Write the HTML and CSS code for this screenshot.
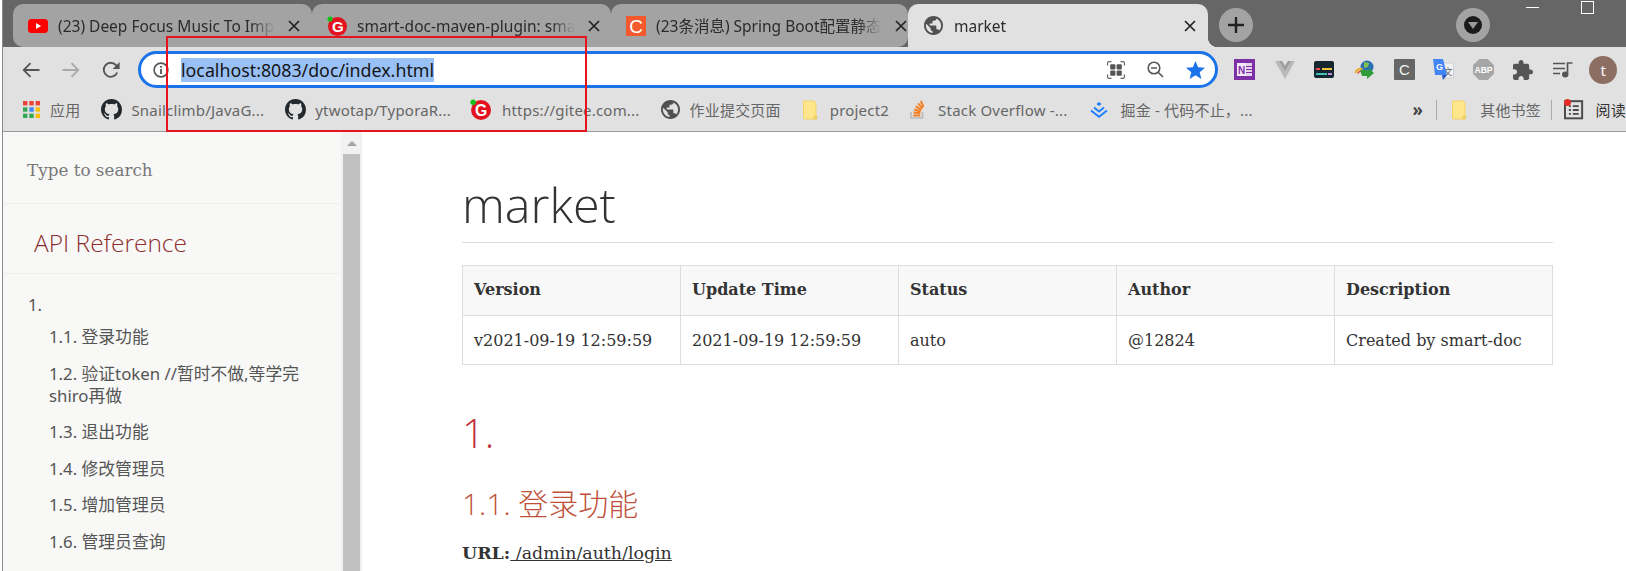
FILE: index.html
```html
<!DOCTYPE html>
<html lang="zh">
<head>
    <meta charset="UTF-8">
    <title>market</title>
    <link rel="stylesheet" href="styles.css">
</head>
<body>
    <svg class="defs" width="0" height="0">
        <symbol id="i-github" viewBox="0 0 16 16"><path fill="#24292e" d="M8 0C3.58 0 0 3.58 0 8c0 3.54 2.29 6.53 5.47 7.59.4.07.55-.17.55-.38 0-.19-.01-.82-.01-1.49-2.01.37-2.53-.49-2.69-.94-.09-.23-.48-.94-.82-1.13-.28-.15-.68-.52-.01-.53.63-.01 1.08.58 1.23.82.72 1.21 1.87.87 2.33.66.07-.52.28-.87.51-1.07-1.78-.2-3.64-.89-3.64-3.95 0-.87.31-1.59.82-2.15-.08-.2-.36-1.02.08-2.12 0 0 .67-.21 2.2.82.64-.18 1.32-.27 2-.27.68 0 1.36.09 2 .27 1.53-1.04 2.2-.82 2.2-.82.44 1.1.16 1.92.08 2.12.51.56.82 1.27.82 2.15 0 3.07-1.87 3.75-3.65 3.95.29.25.54.73.54 1.48 0 1.07-.01 1.93-.01 2.2 0 .21.15.46.55.38A8.013 8.013 0 0016 8c0-4.42-3.58-8-8-8z"/></symbol>
        <symbol id="i-globe" viewBox="2 2 20 20"><path fill="#505050" d="M12 2C6.48 2 2 6.48 2 12s4.48 10 10 10 10-4.48 10-10S17.52 2 12 2zm-1 17.93c-3.95-.49-7-3.85-7-7.93 0-.62.08-1.21.21-1.79L9 15v1c0 1.1.9 2 2 2v1.93zm6.9-2.54c-.26-.81-1-1.39-1.9-1.39h-1v-3c0-.55-.45-1-1-1H8v-2h2c.55 0 1-.45 1-1V7h2c1.1 0 2-.9 2-2v-.41c2.93 1.19 5 4.06 5 7.41 0 2.08-.8 3.97-2.1 5.39z"/></symbol>
        <symbol id="i-gitee" viewBox="0 0 20 20">
            <circle cx="10.5" cy="10.5" r="9.5" fill="#e2131e"/>
            <text x="10.8" y="16" font-family="Liberation Sans" font-weight="700" font-size="15" fill="#fff" text-anchor="middle">G</text>
            <circle cx="3" cy="3" r="2.6" fill="#12c21b"/>
        </symbol>
        <symbol id="i-folder" viewBox="0 0 16 20"><path fill="#fde68c" stroke="#f6d365" d="M1.5 1h10.5l2 2v14l-1 2H2.5l-1-1z"/><path fill="none" stroke="#f3c850" d="M12 19v-3h2.5v3z"/></symbol>
        <symbol id="i-close" viewBox="0 0 12 12"><path stroke="#222" stroke-width="1.7" d="M1 1l10 10M11 1L1 11"/></symbol>
    </svg>

    <div class="window">
        <div class="tabstrip">
            <div class="tab tab-first">
                <svg class="favicon" viewBox="0 0 20 14"><rect width="20" height="14" rx="3.5" fill="#f00"/><path fill="#fff" d="M8 4l5.2 3L8 10z"/></svg>
                <span class="tab-title">(23) Deep Focus Music To Imp</span>
                <svg class="tab-close"><use href="#i-close"/></svg>
            </div>
            <div class="tab">
                <svg class="favicon"><use href="#i-gitee"/></svg>
                <span class="tab-title">smart-doc-maven-plugin: sma</span>
                <svg class="tab-close"><use href="#i-close"/></svg>
            </div>
            <div class="tab tab-last">
                <svg class="favicon" viewBox="0 0 20 20"><rect width="20" height="20" fill="#f4592e"/><text x="10" y="16.5" font-family="Liberation Sans" font-size="19" fill="#fff" text-anchor="middle">C</text></svg>
                <span class="tab-title">(23条消息) Spring Boot配置静态</span>
                <svg class="tab-close"><use href="#i-close"/></svg>
            </div>
            <div class="tab tab-active">
                <svg class="favicon favicon-globe"><use href="#i-globe"/></svg>
                <span class="tab-title">market</span>
                <svg class="tab-close"><use href="#i-close"/></svg>
            </div>
            <div class="newtab">
                <svg width="18" height="18" viewBox="0 0 18 18"><path stroke="#222" stroke-width="2.4" d="M9 1v16M1 9h16"/></svg>
            </div>
            <div class="tabsearch"><span class="tabsearch-dot"></span></div>
            <div class="winbtns">
                <span class="win-min"></span>
                <span class="win-max"></span>
            </div>
        </div>

        <div class="toolbar">
            <div class="navbtn">
                <svg width="18" height="16" viewBox="0 0 18 16"><path fill="none" stroke="#555" stroke-width="1.8" d="M17.5 8H2M8.5 1.2L1.7 8l6.8 6.8"/></svg>
            </div>
            <div class="navbtn">
                <svg width="18" height="16" viewBox="0 0 18 16"><path fill="none" stroke="#a9a9a9" stroke-width="1.8" d="M.5 8H16M9.5 1.2L16.3 8l-6.8 6.8"/></svg>
            </div>
            <div class="navbtn">
                <svg width="18" height="18" viewBox="0 0 18 18"><path fill="none" stroke="#555" stroke-width="1.9" d="M15.2 11.5A7 7 0 1 1 14 4.2L16 6.3"/><path fill="#555" d="M17.6 1v7h-7z"/></svg>
            </div>

            <div class="omnibox">
                <svg class="omni-info" width="16" height="16" viewBox="0 0 16 16"><circle cx="8" cy="8" r="6.9" fill="none" stroke="#555" stroke-width="1.6"/><path fill="#555" d="M7.1 7h1.8v5H7.1zM7.1 4h1.8v1.8H7.1z"/></svg>
                <span class="omni-url">localhost:8083/doc/index.html</span>
                <div class="omni-actions">
                    <svg width="18" height="18" viewBox="0 0 18 18"><path fill="none" stroke="#666" stroke-width="1.2" d="M.6 4.500V2A1.400 1.400 0 0 1 2 .6h2.500M13.500.6H16A1.400 1.400 0 0 1 17.400 2v2.500M17.400 13.500V16a1.400 1.400 0 0 1-1.400 1.400h-2.500M4.500 17.400H2A1.400 1.400 0 0 1 .6 16v-2.500"/><rect x="3.200" y="3.200" width="5.200" height="5.200" rx="1" fill="#555"/><rect x="9.600" y="3.200" width="5.200" height="5.200" rx="1" fill="#555"/><rect x="3.200" y="9.600" width="5.200" height="5.200" rx="1" fill="#555"/><rect x="9.600" y="9.600" width="5.200" height="5.200" rx="1" fill="#555"/></svg>
                    <svg width="17" height="17" viewBox="0 0 17 17"><circle cx="7" cy="7" r="5.8" fill="none" stroke="#555" stroke-width="1.6"/><path stroke="#555" stroke-width="1.6" d="M4 7h6M11.2 11.2L16 16"/></svg>
                    <svg width="19" height="18" viewBox="0 0 19 18"><path fill="#1a73e8" d="M9.500 0l2.600 6.300 6.900.5-5.300 4.400 1.700 6.800-5.900-3.700L3.600 18l1.700-6.800L0 6.800l6.900-.5z"/></svg>
                </div>
            </div>

            <div class="extensions">
                <div class="ext">
                    <svg width="21" height="21" viewBox="0 0 21 21"><rect width="21" height="21" fill="#7d2fa6"/><rect x="11" y="4" width="7" height="13" fill="#e6d4ef"/><path stroke="#7d2fa6" d="M11 7.500h7M11 10.500h7M11 13.500h7"/><rect x="3" y="4" width="9" height="13" fill="#f3e9f8"/><text x="7.500" y="14.500" font-family="Liberation Sans" font-weight="700" font-size="10" fill="#7d2fa6" text-anchor="middle">N</text></svg>
                </div>
                <div class="ext">
                    <svg width="20" height="18" viewBox="0 0 20 18"><path fill="#b9b9b9" d="M0 0h7l3 5 3-5h7L10 18z"/><path fill="#9d9d9d" d="M4 0h3l3 5 3-5h3l-6 10z"/></svg>
                </div>
                <div class="ext">
                    <svg width="20" height="17" viewBox="0 0 20 17"><rect width="20" height="17" rx="2" fill="#15262e"/><rect x="2" y="7" width="4" height="2" fill="#ea4b4b"/><rect x="8" y="7" width="10" height="2" fill="#f4c23c"/><rect x="2" y="12" width="11" height="2" fill="#3fc1b5"/><rect x="14" y="12" width="4" height="2" fill="#c68ad6"/></svg>
                </div>
                <div class="ext">
                    <svg width="21" height="20" viewBox="0 0 21 20"><circle cx="13" cy="7" r="6.500" fill="#2d6fb5"/><path fill="#7fbf4a" d="M10 2l5 1-1 4-4 1z"/><path fill="none" stroke="#e8b13a" stroke-width="2.400" d="M1.500 13a5 5 0 0 1 7-3.500"/><path fill="none" stroke="#d9493e" stroke-width="1.600" d="M4 13.500a3 3 0 0 1 4-2"/><path fill="#2f9e3a" d="M6 10h9v-2l5 5-7 6v-3H8z"/></svg>
                </div>
                <div class="ext">
                    <svg width="21" height="21" viewBox="0 0 21 21"><rect width="21" height="21" rx="1" fill="#666"/><text x="10.500" y="16" font-family="Liberation Sans" font-size="15" fill="#f2f2f2" text-anchor="middle">C</text></svg>
                </div>
                <div class="ext">
                    <svg width="21" height="22" viewBox="0 0 21 22"><path fill="#f1f1f1" stroke="#d0d0d0" d="M8 4h12.500v15H12z"/><text x="15" y="15.500" font-family="Noto Sans CJK SC" font-size="9" fill="#666" text-anchor="middle">文</text><path fill="#4285f4" d="M0 0h10l4 16H2z"/><path fill="#2a56c6" d="M9 16h5l-4 5z"/><text x="6.500" y="11" font-family="Liberation Sans" font-weight="700" font-size="9" fill="#fff" text-anchor="middle">G</text></svg>
                </div>
                <div class="ext">
                    <svg width="21" height="21" viewBox="0 0 21 21"><path fill="#a6a6a6" d="M6.200 0h8.600L21 6.200v8.600L14.800 21H6.200L0 14.800V6.200z"/><text x="10.500" y="14" font-family="Liberation Sans" font-weight="700" font-size="8.600" fill="#fff" text-anchor="middle">ABP</text></svg>
                </div>
                <div class="ext">
                    <svg width="20" height="20" viewBox="2 1 21 21"><path fill="#555" d="M20.500 11H19V7c0-1.100-.9-2-2-2h-4V3.500C13 2.120 11.880 1 10.500 1S8 2.120 8 3.500V5H4c-1.100 0-1.990.9-1.990 2v3.800H3.500c1.490 0 2.700 1.210 2.700 2.700s-1.210 2.700-2.700 2.700H2V20c0 1.100.9 2 2 2h3.800v-1.500c0-1.490 1.210-2.700 2.700-2.700 1.490 0 2.700 1.210 2.700 2.700V22H17c1.100 0 2-.9 2-2v-4h1.500c1.380 0 2.500-1.120 2.500-2.500S21.880 11 20.500 11z"/></svg>
                </div>
                <div class="ext">
                    <svg width="20" height="16" viewBox="0 0 20 16"><path stroke="#555" stroke-width="1.700" d="M0 1.500h12M0 6.500h12M0 11.500h7"/><path fill="none" stroke="#555" stroke-width="1.700" d="M14.500 12V1h5"/><ellipse cx="12.200" cy="12.500" rx="3.200" ry="2.900" fill="#555"/></svg>
                </div>
                <div class="avatar">t</div>
            </div>
        </div>

        <div class="bookmarks">
            <div class="bm">
                <svg class="bm-icon" width="17" height="17" viewBox="0 0 17 17">
                    <rect width="4.400" height="4.400" fill="#ea4335"/><rect x="6.300" width="4.400" height="4.400" fill="#ea4335"/><rect x="12.600" width="4.400" height="4.400" fill="#ea4335"/>
                    <rect y="6.300" width="4.400" height="4.400" fill="#34a853"/><rect x="6.300" y="6.300" width="4.400" height="4.400" fill="#4285f4"/><rect x="12.600" y="6.300" width="4.400" height="4.400" fill="#fbbc05"/>
                    <rect y="12.600" width="4.400" height="4.400" fill="#34a853"/><rect x="6.300" y="12.600" width="4.400" height="4.400" fill="#34a853"/><rect x="12.600" y="12.600" width="4.400" height="4.400" fill="#fbbc05"/>
                </svg>
                <span>应用</span>
            </div>
            <div class="bm bm-gh"><svg class="bm-icon" width="21" height="21"><use href="#i-github"/></svg><span>Snailclimb/JavaG...</span></div>
            <div class="bm bm-gh"><svg class="bm-icon" width="21" height="21"><use href="#i-github"/></svg><span>ytwotap/TyporaR...</span></div>
            <div class="bm bm-gitee"><svg class="bm-icon" width="21" height="21"><use href="#i-gitee"/></svg><span>https://gitee.com...</span></div>
            <div class="bm"><svg class="bm-icon" width="19" height="19"><use href="#i-globe"/></svg><span>作业提交页面</span></div>
            <div class="bm bm-folder"><svg class="bm-icon" width="16" height="20"><use href="#i-folder"/></svg><span>project2</span></div>
            <div class="bm bm-so">
                <svg class="bm-icon" width="14" height="19" viewBox="0 0 14 19"><path fill="none" stroke="#bcbbbb" stroke-width="1.600" d="M1 12v6h11.500v-6"/><path stroke="#f48024" stroke-width="2" d="M3.200 15.500h7M3.500 12.500l6.800.8M4.200 9.500l6.500 2M5.700 6.300l5.800 3.500M8 3.400l4.600 5M10.800 1l2.800 6"/></svg>
                <span>Stack Overflow -...</span>
            </div>
            <div class="bm bm-jj">
                <svg class="bm-icon" width="18" height="16" viewBox="0 0 18 16"><path fill="#1e80ff" d="M9 0l2.600 2L9 4 6.400 2z"/><path fill="none" stroke="#1e80ff" stroke-width="2" d="M4 5.500l5 4 5-4M1 8.500l8 6.300 8-6.300"/></svg>
                <span>掘金 - 代码不止，...</span>
            </div>
            <div class="bm-more">»</div>
            <div class="bm-sep"></div>
            <div class="bm bm-other"><svg class="bm-icon" width="16" height="20"><use href="#i-folder"/></svg><span>其他书签</span></div>
            <div class="bm-sep"></div>
            <div class="bm-reader">
                <svg width="20" height="20" viewBox="0 0 20 20"><rect x="1" y="1" width="17.500" height="17.500" fill="none" stroke="#4a4a4a" stroke-width="2"/><path stroke="#4a4a4a" stroke-width="1.800" d="M5 6h2M9 6h6M5 10h2M9 10h6M5 14h2M9 14h6"/></svg>
                <span class="reader-dot"></span>
                <span class="reader-label">阅读</span>
            </div>
        </div>

        <div class="page">
            <aside class="sidebar">
                <div class="search">Type to search</div>
                <div class="api-title">API Reference</div>
                <ul class="toc">
                    <li class="toc-top">1.</li>
                    <li>1.1. 登录功能</li>
                    <li>1.2. 验证token //暂时不做,等学完shiro再做</li>
                    <li>1.3. 退出功能</li>
                    <li>1.4. 修改管理员</li>
                    <li>1.5. 增加管理员</li>
                    <li>1.6. 管理员查询</li>
                </ul>
            </aside>
            <div class="scrollbar">
                <span class="scroll-up"></span>
                <div class="scroll-thumb"></div>
            </div>
            <main class="content">
                <h1>market</h1>
                <table class="info">
                    <tr>
                        <th>Version</th>
                        <th>Update Time</th>
                        <th>Status</th>
                        <th>Author</th>
                        <th>Description</th>
                    </tr>
                    <tr>
                        <td>v2021-09-19 12:59:59</td>
                        <td>2021-09-19 12:59:59</td>
                        <td>auto</td>
                        <td>@12824</td>
                        <td>Created by smart-doc</td>
                    </tr>
                </table>
                <h2>1.</h2>
                <h3>1.1. 登录功能</h3>
                <p class="url"><strong>URL:</strong><a href="#"> /admin/auth/login</a></p>
            </main>
        </div>
    </div>

    <div class="callout"></div>
</body>
</html>
```

FILE: styles.css
```css
html, body {
    margin: 0;
    padding: 0;
    height: 571px;
    overflow: hidden;
}
body {
    background-color: #fff;
    font-family: "Noto Sans", "Noto Sans CJK SC", sans-serif;
    color: #333;
    position: relative;
}
.defs {
    position: absolute;
}
.window {
    margin-left: 2px;
    border-left: 1px solid #8a8a8a;
    height: 571px;
    display: flex;
    flex-direction: column;
}

/* tab strip */
.tabstrip {
    height: 47px;
    flex: none;
    box-sizing: border-box;
    padding: 4px 0 0 10px;
    background-color: #666;
    display: flex;
    align-items: stretch;
    position: relative;
}
.tab {
    width: 299px;
    box-sizing: border-box;
    padding: 0 9px 0 15px;
    background-color: #a3a3a3;
    border-radius: 10px 10px 0 0;
    display: flex;
    align-items: center;
    position: relative;
    font-size: 15.5px;
    color: #2b2b2b;
}
.tab-first {
    border-bottom-left-radius: 10px;
}
.tab-first::after, .tab:nth-child(2)::after {
    content: "";
    position: absolute;
    right: -1px;
    top: 8px;
    bottom: 9px;
    width: 1px;
    background-color: #7c7c7c;
}
.tab-last {
    width: 297px;
    border-bottom-right-radius: 10px;
}
.tab-active {
    width: 300px;
    background-color: #e1e1e1;
    padding-left: 16px;
}
.tab-active::after {
    content: "";
    position: absolute;
    right: -10px;
    bottom: 0;
    width: 10px;
    height: 10px;
    background: radial-gradient(circle at 100% 0, #666 10px, #e1e1e1 10.5px);
}
.favicon {
    width: 20px;
    height: 20px;
    flex: none;
    margin-right: 10px;
}
.favicon-globe {
    width: 19px;
    height: 19px;
    margin-right: 11px;
}
.tab-title {
    flex: 1;
    white-space: nowrap;
    -webkit-mask-image: linear-gradient(to right, #000 calc(100% - 24px), transparent);
    mask-image: linear-gradient(to right, #000 calc(100% - 24px), transparent);
}
.tab-close {
    width: 12px;
    height: 12px;
    flex: none;
    margin-left: 13px;
    margin-right: 3px;
}
.newtab, .tabsearch {
    width: 34px;
    height: 34px;
    border-radius: 50%;
    background-color: #a3a3a3;
    display: flex;
    align-items: center;
    justify-content: center;
    align-self: flex-start;
    margin-top: 4px;
}
.newtab {
    margin-left: 11px;
}
.tabsearch {
    margin-left: 203px;
}
.tabsearch-dot {
    width: 18px;
    height: 18px;
    border-radius: 50%;
    background: #1b1b1b;
    position: relative;
}
.tabsearch-dot::after {
    content: "";
    position: absolute;
    left: 4px;
    top: 6px;
    border-left: 5px solid transparent;
    border-right: 5px solid transparent;
    border-top: 7px solid #999;
}
.winbtns {
    margin-left: 36px;
    margin-top: -3px;
    display: flex;
    align-items: flex-start;
}
.win-min {
    width: 13px;
    height: 1px;
    margin-top: 6px;
    background-color: #fff;
}
.win-max {
    width: 11px;
    height: 11px;
    margin-left: 42px;
    border: 1px solid #fff;
}

/* toolbar */
.toolbar {
    height: 44px;
    flex: none;
    box-sizing: border-box;
    padding: 4px 0 0 8px;
    background-color: #e1e1e1;
    display: flex;
    align-items: flex-start;
}
.navbtn {
    width: 40px;
    height: 37px;
    display: flex;
    align-items: center;
    justify-content: center;
}
.omnibox {
    width: 1080px;
    height: 37px;
    flex: none;
    margin-left: 7px;
    box-sizing: border-box;
    border: 3px solid #1a73e8;
    border-radius: 19px;
    background-color: #fff;
    padding: 0 10px 0 12px;
    display: flex;
    align-items: center;
}
.omni-url {
    margin-left: 12px;
    background-color: #99c1f6;
    color: #151515;
    font-size: 17.8px;
    line-height: 24px;
}
.omni-actions {
    margin-left: auto;
    display: flex;
    align-items: center;
    gap: 22px;
}
.extensions {
    margin-left: 7px;
    display: flex;
}
.ext, .avatar {
    width: 39.8px;
    height: 37px;
    display: flex;
    align-items: center;
    justify-content: center;
}
.avatar {
    width: 28px;
    height: 28px;
    margin: 5px 0 0 6px;
    border-radius: 50%;
    background-color: #8d6e63;
    color: #fff;
    font-size: 15px;
}

/* bookmarks bar */
.bookmarks {
    height: 41px;
    flex: none;
    box-sizing: border-box;
    padding: 0 0 3px 20px;
    background-color: #e1e1e1;
    border-bottom: 1px solid #999;
    display: flex;
    align-items: center;
    font-size: 15px;
    letter-spacing: .2px;
    color: #666;
    white-space: nowrap;
}
.bm {
    display: flex;
    align-items: center;
    gap: 10px;
    margin-right: 21px;
}
.bm-icon {
    flex: none;
}
.bm-gh {
    gap: 9px;
}
.bm-gitee {
    gap: 11px;
    margin-left: -2px;
}
.bm-folder {
    gap: 12px;
}
.bm-so {
    gap: 14px;
    margin-right: 23px;
}
.bm-jj {
    gap: 12px;
}
.bm-more {
    margin-left: auto;
    font-size: 17px;
    font-weight: 700;
    color: #444;
    margin-right: 13px;
}
.bm-sep {
    width: 1px;
    height: 20px;
    background-color: #aaa;
}
.bm-other {
    margin: 0 10px 0 14px;
    gap: 13px;
}
.bm-reader {
    margin-left: 12px;
    display: flex;
    align-items: center;
    position: relative;
    width: 62px;
}
.reader-dot {
    position: absolute;
    left: 0;
    top: 0;
    width: 7px;
    height: 7px;
    border-radius: 50%;
    background-color: #e52d27;
}
.reader-label {
    margin-left: 12px;
    color: #333;
}

/* page */
.page {
    flex: 1;
    min-height: 0;
    display: flex;
    overflow: hidden;
}
.sidebar {
    width: 338px;
    flex: none;
    background-color: #f8f8f7;
    color: #555;
}
.search {
    height: 72px;
    box-sizing: border-box;
    padding-left: 24px;
    border-bottom: 1px solid #eee;
    line-height: 76px;
    font-family: "DejaVu Serif", serif;
    font-size: 16.8px;
    color: #777;
}
.api-title {
    height: 70px;
    box-sizing: border-box;
    padding-left: 31px;
    border-bottom: 1px solid #eee;
    line-height: 78px;
    font-family: "Open Sans", "Noto Sans CJK SC", sans-serif;
    font-weight: 300;
    font-size: 24.5px;
    color: #8e2f2f;
}
.toc {
    list-style: none;
    margin: 0;
    padding: 20px 30px 0 46px;
    font-size: 16.8px;
    line-height: 22px;
}
.toc li {
    margin-bottom: 14.6px;
}
.toc .toc-top {
    margin: 0 0 10px -21px;
}
.scrollbar {
    width: 21px;
    flex: none;
    background-color: #f1f1f1;
    position: relative;
    box-sizing: border-box;
    padding: 22px 2px 0;
}
.scroll-up {
    position: absolute;
    left: 6px;
    top: 9px;
    border-left: 5px solid transparent;
    border-right: 5px solid transparent;
    border-bottom: 5px solid #a3a3a3;
}
.scroll-thumb {
    height: 500px;
    background-color: #c1c1c1;
}
.content {
    flex: 1;
    padding: 0 73px 0 100px;
}
h1 {
    margin: 38px 0 22px;
    padding-bottom: 4px;
    border-bottom: 1px solid #ddd;
    font-family: "Open Sans", sans-serif;
    font-weight: 300;
    font-size: 48.5px;
    line-height: 68px;
    color: #333;
}
.info {
    width: 100%;
    table-layout: fixed;
    border-collapse: collapse;
    font-family: "DejaVu Serif", serif;
    font-size: 16px;
    color: #333;
}
.info th, .info td {
    border: 1px solid #ddd;
    padding: 0 11px;
    text-align: left;
}
.info th {
    height: 47px;
    padding-bottom: 2px;
    background-color: #f8f8f8;
}
.info td {
    height: 47px;
    padding-top: 1px;
}
h2 {
    margin: 41px 0 0;
    font-family: "Open Sans", sans-serif;
    font-weight: 300;
    font-size: 40px;
    line-height: 54px;
    color: #c0303a;
}
h3 {
    margin: 24px 0 0;
    font-family: "Open Sans", "Noto Sans CJK SC", sans-serif;
    font-weight: 300;
    font-size: 30px;
    line-height: 40px;
    color: #c0503a;
}
.url {
    margin: 17px 0 0;
    font-family: "DejaVu Serif", serif;
    font-size: 17.4px;
    line-height: 24px;
}
.url a {
    color: #333;
}

/* red box drawn over the screenshot */
.callout {
    position: absolute;
    left: 166px;
    top: 36px;
    width: 417px;
    height: 92px;
    border: 2px solid #e6141e;
}
```
